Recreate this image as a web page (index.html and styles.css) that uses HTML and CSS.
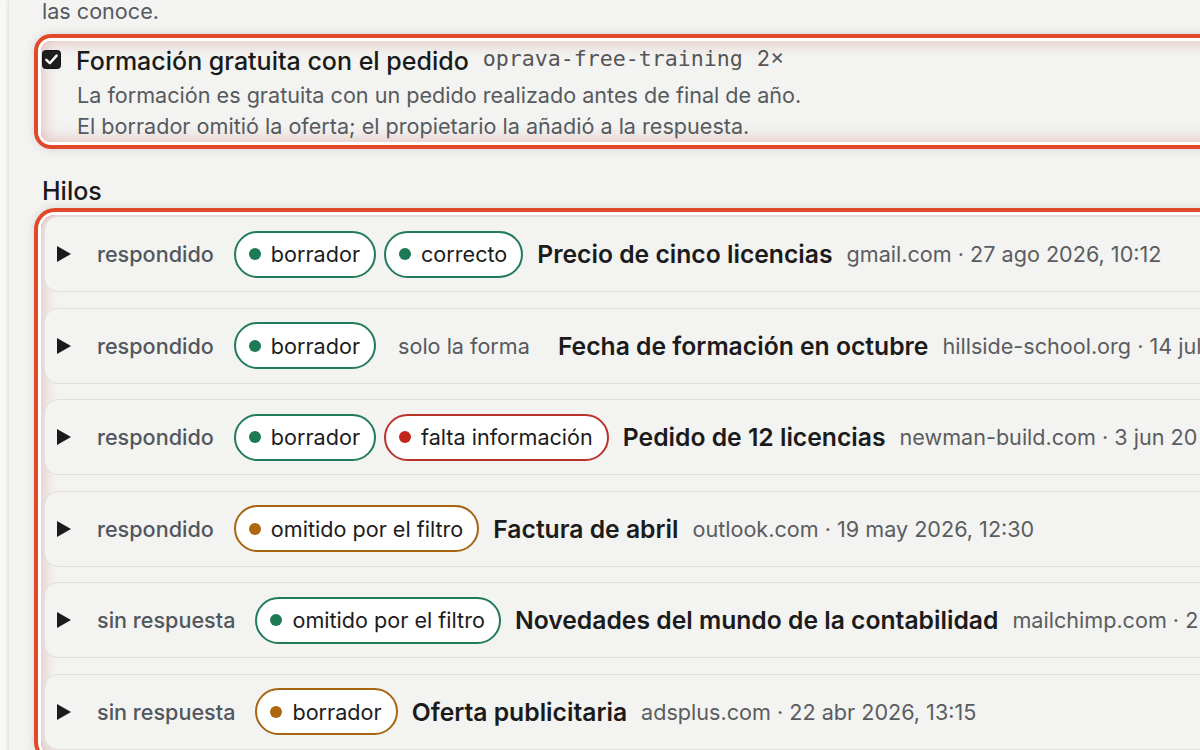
FILE: index.html
```html
<!DOCTYPE html>
<html lang="es">
<head>
<meta charset="utf-8">
<title>Hilos</title>
<link rel="stylesheet" href="styles.css">
</head>
<body>
<div class="panel">
  <p class="intro">las conoce.</p>

  <div class="fact hl">
    <div class="fact-head">
      <svg class="check" width="19" height="19" viewBox="0 0 19 19" aria-hidden="true">
        <rect x="0.5" y="0.5" width="18" height="18" rx="3" fill="#1f1d1e" stroke="#111" stroke-width="1"/>
        <path d="M4.3 9.8 L7.8 13.2 L14.6 5.6" fill="none" stroke="#fff" stroke-width="2.4" stroke-linecap="round" stroke-linejoin="round"/>
      </svg>
      <span class="fact-title">Formación gratuita con el pedido</span>
      <code class="fact-key">oprava-free-training</code>
      <span class="fact-count">2×</span>
    </div>
    <div class="fact-desc">
      <div>La formación es gratuita con un pedido realizado antes de final de año.</div>
      <div>El borrador omitió la oferta; el propietario la añadió a la respuesta.</div>
    </div>
  </div>

  <h2 class="section">Hilos</h2>

  <div class="threads hl">
    <div class="row">
      <span class="tri"></span>
      <span class="status">respondido</span>
      <span class="pills">
        <span class="pill green"><i class="dot"></i>borrador</span>
        <span class="pill green"><i class="dot"></i>correcto</span>
      </span>
      <span class="title">Precio de cinco licencias</span>
      <span class="meta">gmail.com · 27 ago 2026, 10:12</span>
    </div>
    <div class="row">
      <span class="tri"></span>
      <span class="status">respondido</span>
      <span class="pills">
        <span class="pill green"><i class="dot"></i>borrador</span>
        <span class="pill plain">solo la forma</span>
      </span>
      <span class="title">Fecha de formación en octubre</span>
      <span class="meta">hillside-school.org · 14 jul</span>
    </div>
    <div class="row">
      <span class="tri"></span>
      <span class="status">respondido</span>
      <span class="pills">
        <span class="pill green"><i class="dot"></i>borrador</span>
        <span class="pill red"><i class="dot"></i>falta información</span>
      </span>
      <span class="title">Pedido de 12 licencias</span>
      <span class="meta">newman-build.com · 3 jun 20</span>
    </div>
    <div class="row">
      <span class="tri"></span>
      <span class="status">respondido</span>
      <span class="pills">
        <span class="pill orange"><i class="dot"></i>omitido por el filtro</span>
      </span>
      <span class="title">Factura de abril</span>
      <span class="meta">outlook.com · 19 may 2026, 12:30</span>
    </div>
    <div class="row">
      <span class="tri"></span>
      <span class="status">sin respuesta</span>
      <span class="pills">
        <span class="pill green"><i class="dot"></i>omitido por el filtro</span>
      </span>
      <span class="title">Novedades del mundo de la contabilidad</span>
      <span class="meta">mailchimp.com · 2</span>
    </div>
    <div class="row">
      <span class="tri"></span>
      <span class="status">sin respuesta</span>
      <span class="pills">
        <span class="pill orange"><i class="dot"></i>borrador</span>
      </span>
      <span class="title">Oferta publicitaria</span>
      <span class="meta">adsplus.com · 22 abr 2026, 13:15</span>
    </div>
  </div>
</div>
</body>
</html>
```
FILE: styles.css
```css
html, body {
  margin: 0;
  padding: 0;
  overflow: hidden;
  height: 750px;
}
body {
  background: #f8f8f6;
  font-family: Inter, "Noto Sans", sans-serif;
  color: #1c1c1c;
}
.panel {
  margin-left: 9px;
  width: 1280px;
  height: 760px;
  background: #f3f3f1;
  box-shadow: -1px 0 4px rgba(0, 0, 0, 0.12);
  padding-left: 33px;
  box-sizing: border-box;
}
.intro {
  margin: 0;
  position: relative;
  top: -4px;
  font-size: 21.6px;
  line-height: 31px;
  color: #555a5e;
}
.hl {
  border-radius: 10px;
  box-shadow:
    0 0 0 3px #ffffff,
    0 0 0 7px #e04a2b,
    0 0 10px 8px rgba(0, 0, 0, 0.10),
    inset 0 0 14px 3px rgba(185, 95, 85, 0.30);
}
.fact {
  margin-top: 10px;
  margin-left: -1px;
  padding: 5px 0 0 1px;
  height: 101px;
  box-sizing: border-box;
}
.fact-head {
  display: flex;
  align-items: center;
  height: 30px;
  white-space: nowrap;
}
.check {
  display: block;
  flex: none;
  margin-right: 15px;
  margin-top: -4px;
}
.fact-title {
  font-size: 25px;
  font-weight: 500;
  line-height: 30px;
  color: #1a1a1a;
}
.fact-key {
  font-family: "DejaVu Sans Mono", "Liberation Mono", monospace;
  font-size: 21.6px;
  color: #555;
  margin-left: 14px;
  position: relative;
  top: -3px;
}
.fact-count {
  font-size: 21.6px;
  color: #555;
  margin-left: 14px;
  position: relative;
  top: -3px;
}
.fact-desc {
  margin-top: 4px;
  padding-left: 35px;
  font-size: 21.6px;
  line-height: 31px;
  color: #565a5e;
  white-space: nowrap;
}
.section {
  margin: 34px 0 9px;
  font-size: 25px;
  font-weight: 500;
  line-height: 30px;
  color: #1a1a1a;
}
.threads {
  margin-left: -1px;
  padding: 1px 0 0 3px;
  height: 540px;
  border-radius: 14px;
  display: flex;
  flex-direction: column;
  gap: 15.6px;
}
.row {
  flex: none;
  height: 76px;
  box-sizing: border-box;
  border: 1px solid #e0dfdc;
  border-radius: 14px;
  background: #f3f3f1;
  display: flex;
  align-items: center;
  padding-left: 12px;
  white-space: nowrap;
}
.tri {
  width: 0;
  height: 0;
  border-top: 8px solid transparent;
  border-bottom: 8px solid transparent;
  border-left: 14px solid #1b1b1b;
  margin-right: 26px;
  flex: none;
}
.status {
  font-size: 21.6px;
  font-weight: 500;
  color: #52575d;
  margin-right: 20px;
}
.pills {
  display: flex;
  gap: 8px;
  margin-right: 14px;
}
.pill {
  display: inline-flex;
  align-items: center;
  height: 47px;
  box-sizing: border-box;
  padding: 0 14px 0 13px;
  border: 2px solid transparent;
  border-radius: 24px;
  background: #ffffff;
  font-size: 21.6px;
  color: #1c1c1c;
}
.dot {
  width: 12px;
  height: 12px;
  border-radius: 50%;
  margin-right: 10px;
  flex: none;
}
.pill.green { border-color: #217a58; }
.pill.green .dot { background: #1c7a55; }
.pill.red { border-color: #b8342b; }
.pill.red .dot { background: #c1261d; }
.pill.orange { border-color: #a8650f; }
.pill.orange .dot { background: #b0660c; }
.pill.plain {
  background: transparent;
  color: #565a5e;
  padding-left: 12px;
  padding-right: 12px;
}
.title {
  font-size: 24.7px;
  font-weight: 600;
  color: #1b1b1b;
  margin-right: 14px;
}
.meta {
  font-size: 21.6px;
  color: #5a5d60;
}
```
